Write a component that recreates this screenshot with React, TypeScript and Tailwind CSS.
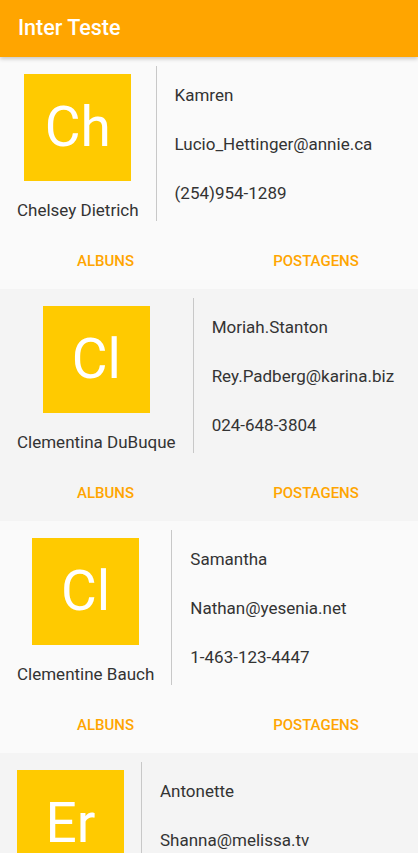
import React from "react";

type User = { name: string; initials: string; username: string; email: string; phone: string };

const users: User[] = [
  { name: "Chelsey Dietrich", initials: "Ch", username: "Kamren", email: "Lucio_Hettinger@annie.ca", phone: "(254)954-1289" },
  { name: "Clementina DuBuque", initials: "Cl", username: "Moriah.Stanton", email: "Rey.Padberg@karina.biz", phone: "024-648-3804" },
  { name: "Clementine Bauch", initials: "Cl", username: "Samantha", email: "Nathan@yesenia.net", phone: "1-463-123-4447" },
  { name: "Ervin Howell", initials: "Er", username: "Antonette", email: "Shanna@melissa.tv", phone: "010-692-6593 x09125" },
];

function Card({ u, alt }: { u: User; alt: boolean }) {
  return (
    <div className={`h-[232px] shrink-0 flex flex-col ${alt ? "bg-[#f4f4f4]" : "bg-[#fafafa]"}`}>
      <div className="flex pt-[9px]">
        <div className="flex flex-col items-center px-[17px] border-r border-[#c8c8c8] h-[155px]">
          <div className="w-[107px] h-[107px] mt-[8px] bg-[#ffca00] flex items-center justify-center text-white text-[55px] font-normal leading-none">
            {u.initials}
          </div>
          <div className="mt-[18px] text-[17px] leading-[22px] text-[#333333] whitespace-nowrap">{u.name}</div>
        </div>
        <div className="flex flex-col pl-[18px] pt-[18px] text-[17px] leading-[22px] text-[#333333] gap-[27px] whitespace-nowrap">
          <div>{u.username}</div>
          <div>{u.email}</div>
          <div>{u.phone}</div>
        </div>
      </div>
      <div className="flex mt-[30px] pl-[1px] overflow-hidden">
        <div className="w-[209px] shrink-0 text-center text-[15px] font-medium text-[#ffa500] leading-[20px]">ALBUNS</div>
        <div className="w-[212px] shrink-0 text-center text-[15px] font-medium text-[#ffa500] leading-[20px]">POSTAGENS</div>
      </div>
    </div>
  );
}

export default function App() {
  return (
    <div className="w-[418px] h-[853px] overflow-hidden flex flex-col bg-[#fafafa]" style={{ fontFamily: "Roboto, 'Liberation Sans', sans-serif" }}>
      <div className="h-[57px] shrink-0 bg-[#ffa500] flex items-center pl-[18px] text-white text-[21.5px] font-medium shadow-[0_2px_4px_rgba(0,0,0,0.2)] relative z-10">
        Inter Teste
      </div>
      {users.map((u, i) => (
        <Card key={i} u={u} alt={i % 2 === 1} />
      ))}
    </div>
  );
}
